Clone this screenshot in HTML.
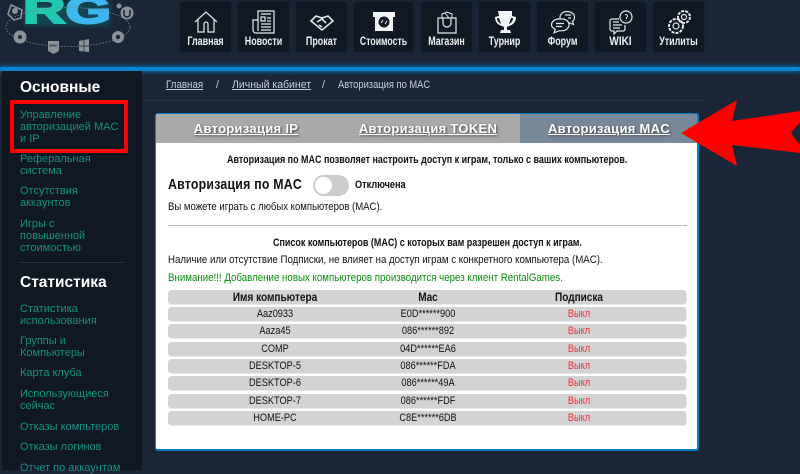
<!DOCTYPE html>
<html lang="ru"><head><meta charset="utf-8"><title>Авторизация по MAC</title>
<style>
html,body{margin:0;padding:0;width:800px;height:470px;overflow:hidden;background:#1a2637;font-family:"Liberation Sans","Noto Sans CJK SC",sans-serif}
.a{position:absolute}
.t{position:absolute;top:2px;height:50px;background:#101823;color:#eef1f4;text-align:center;font-size:11.5px;font-weight:bold;box-shadow:0 0 3px #141e2c}
.t span{position:absolute;left:-10px;right:-10px;top:33px;line-height:14px;transform:scaleX(.776)}
.t svg{position:absolute;left:50%;top:7px;margin-left:-13px;width:26px;height:26px;fill:none;stroke:#e6e9ec;stroke-width:1.2}
.line{position:absolute;left:0;top:67px;width:800px;height:4px;background:#0a83cc;box-shadow:0 0 5px 1px #0a6ba8}
.side{position:absolute;left:2px;top:71px;width:140px;height:399px;background:#101823}
.h{position:absolute;left:20px;color:#fff;font-weight:bold;font-size:15.5px;letter-spacing:0;line-height:18px}
.l{position:absolute;left:20px;color:#12927f;font-size:11px;letter-spacing:0;line-height:12px;white-space:nowrap}
.bc{position:absolute;top:79px;color:#c9d0d8;font-size:11px;line-height:13px;white-space:nowrap;transform-origin:left;transform:scaleX(.955)}
.bc u{color:#c9d0d8}
.panel{position:absolute;left:155px;top:113px;width:541px;height:335px;background:#fff;border:1px solid #0a7cc4;border-width:1px 2px 2px 1px;border-radius:3px}
.tab{position:absolute;top:114px;height:29px;line-height:29px;text-align:center;color:#fff;font-size:13px;font-weight:bold;letter-spacing:.3px;text-decoration:underline;text-shadow:1px 1px 2px #444}
.c{position:absolute;color:#111;font-size:11px;line-height:13px;white-space:nowrap;transform-origin:left}
.b{font-weight:bold}
.row{position:absolute;left:168px;width:518px;height:14px;background:#d3d3d3;border:1px solid #e8e8e8;border-width:0 1px 1px 0;border-radius:4px;color:#111;font-size:11px;line-height:15px}
.row i{font-style:normal;position:absolute;top:0;width:200px;text-align:center;white-space:nowrap;transform:scaleX(.836)}
.n{left:7px}.m{left:160px}.s{left:311px;color:#f0303c}
.hd{font-weight:bold;color:#111;font-size:12px}.hd .s{color:#111}
</style></head><body>

<!-- logo -->
<svg class="a" style="left:0;top:0" width="140" height="60" viewBox="0 0 140 60">
<defs><linearGradient id="g" x1="0" x2="1" y1="0" y2="0"><stop offset="0" stop-color="#1fc9ae"/><stop offset=".5" stop-color="#22c9b4"/><stop offset=".52" stop-color="#3fb8ee"/><stop offset="1" stop-color="#3cb6f2"/></linearGradient>
<filter id="bl"><feGaussianBlur stdDeviation="3"/></filter></defs>
<rect x="24" y="2" width="86" height="24" fill="#0f6d78" opacity=".45" filter="url(#bl)"/>
<text x="23" y="23" font-family="Liberation Sans" font-weight="bold" font-size="38" fill="url(#g)" stroke="url(#g)" stroke-width="2" textLength="88" lengthAdjust="spacingAndGlyphs">RG</text>
<ellipse cx="68" cy="27" rx="62" ry="19.5" fill="none" stroke="#7e8791" stroke-width=".8" stroke-dasharray="1.6 1.6"/>
<g fill="#8b929a">
<path d="M11 5l11 5 -1 8-7 2-6-6z" fill="none" stroke="#8b929a" stroke-width="1.6"/><circle cx="15" cy="11" r="3"/>
<circle cx="20" cy="37" r="6.5"/>
<path d="M48 41h11v10l-5.500 3-5.500-3z"/>
<path d="M79 41l10-2v13l-10-1z"/>
<circle cx="118" cy="37" r="6"/>
<circle cx="127" cy="13" r="6.500"/><circle cx="119" cy="6" r="2.500"/>
</g>
<text x="53.500" y="47" font-size="3.500" font-family="Liberation Sans" font-weight="bold" text-anchor="middle" fill="#1a2637">EPIC</text>
<circle cx="118" cy="37" r="2.200" fill="#1a2637"/>
<path d="M124 10v4a3 3 0 0 0 6 0v-4" stroke="#1a2637" stroke-width="1.600" fill="none"/>
<circle cx="20" cy="37" r="2" fill="#1a2637"/>
<path d="M84 40v12M79 46h10" stroke="#1a2637" stroke-width=".7"/>
</svg>

<!-- nav -->
<div class="t" style="left:180px;width:51px"><svg viewBox="0 0 26 26"><path d="M2 13L13 3l11 10M5 11v12h6v-8a2 2 0 0 1 4 0v8h6V11"/></svg><span>Главная</span></div>
<div class="t" style="left:238px;width:51px"><svg viewBox="0 0 26 26"><path d="M7 2h16v22H5a3 3 0 0 1-3-3V11h5zM7 11v11"/><path d="M10 5h10M10 8h4v4h-4zM16 9h4M16 12h4M10 15h10M10 18h10M10 21h10"/></svg><span>Новости</span></div>
<div class="t" style="left:296px;width:51px"><svg viewBox="0 0 26 26" style="stroke-width:1.6"><path d="M2 12l5-5 6 2 6-2 5 5-11 9zM8 13l5-3 4 4M10 16l3 2"/></svg><span>Прокат</span></div>
<div class="t" style="left:354px;width:59px"><svg viewBox="0 0 26 26" style="stroke:none"><path fill="#f2f4f6" d="M2 3h22v5h-2v14H4V8H2z"/><circle cx="13" cy="13" r="5.500" fill="#101823"/><path d="M10 14l2-3M14 15l2-3" stroke="#eee" stroke-width="1"/></svg><span style="transform:scaleX(.758)">Стоимость</span></div>
<div class="t" style="left:421px;width:51px"><svg viewBox="0 0 26 26"><path d="M4 9h18v15H4zM9 9v5a4 4 0 0 0 8 0V9"/><path d="M8 9V5l5 -2 5 2v4M11 4l4 5" stroke-width="1"/></svg><span>Магазин</span></div>
<div class="t" style="left:479px;width:51px"><svg viewBox="0 0 26 26" style="stroke:none"><path fill="#f2f4f6" d="M6 2h14v5l4 1c0 5-3 8-7 9l-2 1v3h3l1 3H8l1-3h3v-3l-2-1c-4-1-7-4-7-9l4-1z"/><path fill="#101823" d="M5 9h2l2 6c-2-1-4-3-4-6zM21 9h-2l-2 6c2-1 4-3 4-6z"/></svg><span>Турнир</span></div>
<div class="t" style="left:537px;width:51px"><svg viewBox="0 0 26 26"><path d="M17 2.500c4.200 0 7.500 2.500 7.500 5.800 0 1.800-.8 3.200-2 4.200l1 3-4-1.500h-3c-4 0-6.500-2.700-6.500-5.700s3-5.800 7-5.800z"/><path d="M9 10h3c4.200 0 7 2.700 7 5.800s-3 6-7 6H9l-5 2 1.300-3.500C3 19.300 1.500 17.800 1.500 15.800 1.500 12.700 4.800 10 9 10z" fill="#101823"/><path d="M6 14.500h8M6 17.500h6M15 6h6M18 9h3"/></svg><span>Форум</span></div>
<div class="t" style="left:595px;width:51px"><svg viewBox="0 0 26 26"><circle cx="18" cy="8" r="6"/><path d="M17 6a1.500 1.500 0 1 1 1.500 2.500V10M18 11.500v.5" stroke-width="1"/><path d="M11 10H4a2 2 0 0 0-2 2v8a2 2 0 0 0 2 2h2v3l3-3h6a2 2 0 0 0 2-2v-4"/><path d="M5 13h6M5 16h9M5 19h7"/></svg><span style="transform:scaleX(.867)">WIKI</span></div>
<div class="t" style="left:653px;width:51px"><svg viewBox="0 0 26 26"><circle cx="10" cy="17" r="3"/><circle cx="10" cy="17" r="7" stroke-dasharray="3 1.200" stroke-width="2"/><circle cx="18" cy="8" r="2.500"/><circle cx="18" cy="8" r="6" stroke-dasharray="3 1.200" stroke-width="2"/></svg><span>Утилиты</span></div>

<div class="line"></div>

<!-- sidebar -->
<div class="side"></div>
<div class="h" style="top:79px">Основные</div>
<div class="l" style="top:109px">Управление<br>авторизацией MAC<br>и IP</div>
<div class="a" style="left:10px;top:100px;width:110px;height:45px;border:4px solid #f00"></div>
<div class="l" style="top:153px">Реферальная<br>система</div>
<div class="l" style="top:185px">Отсутствия<br>аккаунтов</div>
<div class="l" style="top:218px">Игры с<br>повышенной<br>стоимостью</div>
<div class="a" style="left:20px;top:262px;width:104px;height:1px;background:#26303d"></div>
<div class="h" style="top:274px">Статистика</div>
<div class="l" style="top:303px">Статистика<br>использования</div>
<div class="l" style="top:335px">Группы и<br>Компьютеры</div>
<div class="l" style="top:367px">Карта клуба</div>
<div class="l" style="top:388px">Использующиеся<br>сейчас</div>
<div class="l" style="top:421px">Отказы компьтеров</div>
<div class="l" style="top:441px">Отказы логинов</div>
<div class="l" style="top:462px">Отчет по аккаунтам</div>

<!-- breadcrumb -->
<div class="bc" style="left:166px;transform:scaleX(.888)"><u>Главная</u></div>
<div class="bc" style="left:216px">/</div>
<div class="bc" style="left:232px"><u>Личный кабинет</u></div>
<div class="bc" style="left:322px">/</div>
<div class="bc" style="left:338px;transform:scaleX(.85)">Авторизация по MAC</div>
<div class="a" style="left:142px;top:100px;width:563px;height:1px;background:#243245"></div>

<!-- panel -->
<div class="panel"></div>
<div class="a" style="left:156px;top:114px;width:364px;height:29px;background:#a9a9a9"></div>
<div class="a" style="left:520px;top:114px;width:177px;height:29px;background:#778899"></div>
<div class="tab" style="left:156px;width:180px">Авторизация IP</div>
<div class="tab" style="left:338px;width:180px">Авторизация TOKEN</div>
<div class="tab" style="left:520px;width:178px">Авторизация MAC</div>

<div class="c b" style="left:227px;top:154px;transform:scaleX(.815)">Авторизация по MAC позволяет настроить доступ к играм, только с ваших компьютеров.</div>
<div class="c b" style="left:168px;top:177px;font-size:15px;line-height:16px;letter-spacing:.3px;transform:scaleX(.82)">Авторизация по MAC</div>
<div class="a" style="left:313px;top:175px;width:36px;height:21px;border-radius:11px;background:#ccc"></div>
<div class="a" style="left:315px;top:177px;width:17px;height:17px;border-radius:50%;background:#fff"></div>
<div class="c b" style="left:355px;top:179px;transform:scaleX(.833)">Отключена</div>
<div class="c" style="left:168px;top:201px;transform:scaleX(.87)">Вы можете играть с любых компьютеров (MAC).</div>
<div class="a" style="left:168px;top:225px;width:519px;height:1px;background:#bbb"></div>
<div class="c b" style="left:273px;top:237px;transform:scaleX(.815)">Список компьютеров (MAC) с которых вам разрешен доступ к играм.</div>
<div class="c" style="left:168px;top:254px;transform:scaleX(.88)">Наличие или отсутствие Подписки, не влияет на доступ играм с конкретного компьютера (MAC).</div>
<div class="c" style="left:168px;top:272px;color:#0a8a12;transform:scaleX(.883)">Внимание!!! Добавление новых компьютеров производится через клиент RentalGames.</div>

<div class="row hd" style="top:290px"><i class="n">Имя компьютера</i><i class="m">Mac</i><i class="s">Подписка</i></div>
<div class="row" style="top:307px"><i class="n">Aaz0933</i><i class="m">E0D******900</i><i class="s">Выкл</i></div>
<div class="row" style="top:324px"><i class="n">Aaza45</i><i class="m">086******892</i><i class="s">Выкл</i></div>
<div class="row" style="top:342px"><i class="n">COMP</i><i class="m">04D******EA6</i><i class="s">Выкл</i></div>
<div class="row" style="top:359px"><i class="n">DESKTOP-5</i><i class="m">086******FDA</i><i class="s">Выкл</i></div>
<div class="row" style="top:376px"><i class="n">DESKTOP-6</i><i class="m">086******49A</i><i class="s">Выкл</i></div>
<div class="row" style="top:394px"><i class="n">DESKTOP-7</i><i class="m">086******FDF</i><i class="s">Выкл</i></div>
<div class="row" style="top:411px"><i class="n">HOME-PC</i><i class="m">C8E******6DB</i><i class="s">Выкл</i></div>

<!-- arrow -->
<svg class="a" style="left:670px;top:95px" width="130" height="75" viewBox="670 95 130 75"><polygon fill="#f00" points="681,133 737,100 732,121 800,111 800,122 791,133 800,145 800,153 732,145 737,166"/></svg>
</body></html>
